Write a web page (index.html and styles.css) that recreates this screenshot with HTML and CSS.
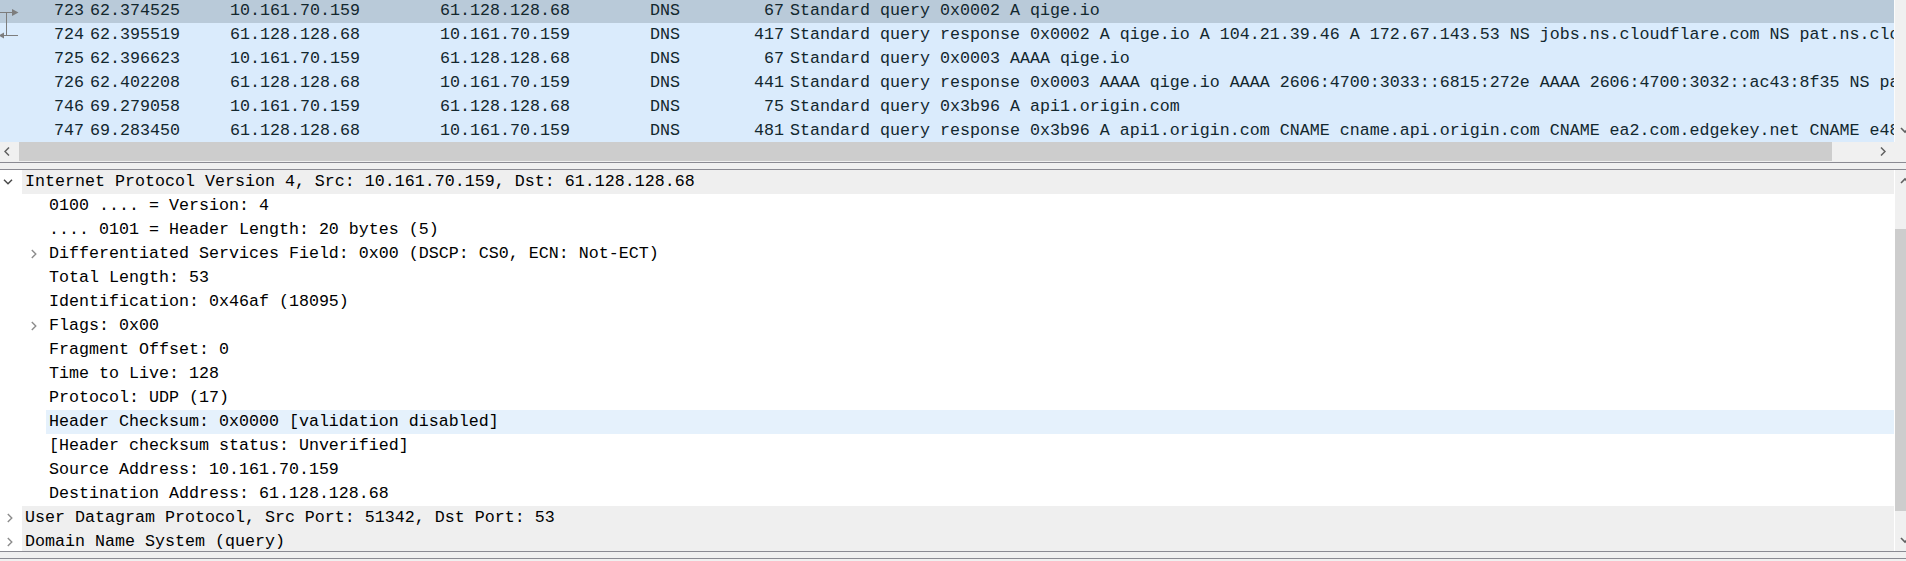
FILE: index.html
```html
<!DOCTYPE html>
<html>
<head>
<meta charset="utf-8">
<link rel="stylesheet" href="styles.css">
</head>
<body>
<div class="app">
  <section class="plist">
    <div class="plist-rows">
      <div class="plist-inner">
        <div class="prow sel"><span class="c-no">723</span><span>62.374525</span><span>10.161.70.159</span><span>61.128.128.68</span><span>DNS</span><span class="c-len">67</span><span class="c-info">Standard query 0x0002 A qige.io</span></div>
        <div class="prow"><span class="c-no">724</span><span>62.395519</span><span>61.128.128.68</span><span>10.161.70.159</span><span>DNS</span><span class="c-len">417</span><span class="c-info">Standard query response 0x0002 A qige.io A 104.21.39.46 A 172.67.143.53 NS jobs.ns.cloudflare.com NS pat.ns.cloudflare.com</span></div>
        <div class="prow"><span class="c-no">725</span><span>62.396623</span><span>10.161.70.159</span><span>61.128.128.68</span><span>DNS</span><span class="c-len">67</span><span class="c-info">Standard query 0x0003 AAAA qige.io</span></div>
        <div class="prow"><span class="c-no">726</span><span>62.402208</span><span>61.128.128.68</span><span>10.161.70.159</span><span>DNS</span><span class="c-len">441</span><span class="c-info">Standard query response 0x0003 AAAA qige.io AAAA 2606:4700:3033::6815:272e AAAA 2606:4700:3032::ac43:8f35 NS pat.ns.cloudflare.com</span></div>
        <div class="prow"><span class="c-no">746</span><span>69.279058</span><span>10.161.70.159</span><span>61.128.128.68</span><span>DNS</span><span class="c-len">75</span><span class="c-info">Standard query 0x3b96 A api1.origin.com</span></div>
        <div class="prow"><span class="c-no">747</span><span>69.283450</span><span>61.128.128.68</span><span>10.161.70.159</span><span>DNS</span><span class="c-len">481</span><span class="c-info">Standard query response 0x3b96 A api1.origin.com CNAME cname.api.origin.com CNAME ea2.com.edgekey.net CNAME e4812.a.akamaiedge.net</span></div>
      </div>
    </div>
    <div class="vscroll">
      <svg class="arr arr-down-top" width="10" height="7" viewBox="0 0 10 7"><polyline points="1,1 5,5 9,1" fill="none" stroke="#606060" stroke-width="1.6"/></svg>
    </div>
    <div class="hscroll">
      <div class="hbtn hbtn-left"><svg width="6" height="9" viewBox="0 0 6 9"><polyline points="5,0.5 1,4.5 5,8.5" fill="none" stroke="#606060" stroke-width="1.5"/></svg></div>
      <div class="hthumb"></div>
      <div class="htrack"><svg width="6" height="9" viewBox="0 0 6 9"><polyline points="1,0.5 5,4.5 1,8.5" fill="none" stroke="#606060" stroke-width="1.5"/></svg></div>
    </div>
    <div class="corner"></div>
    <svg class="related" width="20" height="42" viewBox="0 0 20 42">
      <line x1="0" y1="12.5" x2="13" y2="12.5" stroke="#7d7d7d" stroke-width="1"/>
      <polygon points="12,9 18.5,12.5 12,16" fill="#7d7d7d"/>
      <line x1="6.5" y1="12.5" x2="6.5" y2="36" stroke="#7d7d7d" stroke-width="1"/>
      <line x1="3" y1="35.5" x2="18" y2="35.5" stroke="#7d7d7d" stroke-width="1"/>
      <polygon points="4,32.5 -1.5,35.5 4,38.5" fill="#7d7d7d"/>
    </svg>
  </section>

  <div class="splitter"></div>

  <section class="details">
    <div class="dtree">
      <div class="drow l0"><span class="exp"><svg class="chev-open" width="10" height="6" viewBox="0 0 10 6"><polyline points="1,0.8 5,4.8 9,0.8" fill="none" stroke="#4a4a4a" stroke-width="1.5"/></svg></span><span class="item par">Internet Protocol Version 4, Src: 10.161.70.159, Dst: 61.128.128.68</span></div>
      <div class="drow l1"><span class="exp"></span><span class="item">0100 .... = Version: 4</span></div>
      <div class="drow l1"><span class="exp"></span><span class="item">.... 0101 = Header Length: 20 bytes (5)</span></div>
      <div class="drow l1"><span class="exp"><svg class="chev-closed" width="6" height="10" viewBox="0 0 6 10"><polyline points="0.8,1 4.8,5 0.8,9" fill="none" stroke="#8c8c8c" stroke-width="1.4"/></svg></span><span class="item">Differentiated Services Field: 0x00 (DSCP: CS0, ECN: Not-ECT)</span></div>
      <div class="drow l1"><span class="exp"></span><span class="item">Total Length: 53</span></div>
      <div class="drow l1"><span class="exp"></span><span class="item">Identification: 0x46af (18095)</span></div>
      <div class="drow l1"><span class="exp"><svg class="chev-closed" width="6" height="10" viewBox="0 0 6 10"><polyline points="0.8,1 4.8,5 0.8,9" fill="none" stroke="#8c8c8c" stroke-width="1.4"/></svg></span><span class="item">Flags: 0x00</span></div>
      <div class="drow l1"><span class="exp"></span><span class="item">Fragment Offset: 0</span></div>
      <div class="drow l1"><span class="exp"></span><span class="item">Time to Live: 128</span></div>
      <div class="drow l1"><span class="exp"></span><span class="item">Protocol: UDP (17)</span></div>
      <div class="drow l1"><span class="exp"></span><span class="item hover">Header Checksum: 0x0000 [validation disabled]</span></div>
      <div class="drow l1"><span class="exp"></span><span class="item">[Header checksum status: Unverified]</span></div>
      <div class="drow l1"><span class="exp"></span><span class="item">Source Address: 10.161.70.159</span></div>
      <div class="drow l1"><span class="exp"></span><span class="item">Destination Address: 61.128.128.68</span></div>
      <div class="drow l0"><span class="exp"><svg class="chev-closed" width="6" height="10" viewBox="0 0 6 10"><polyline points="0.8,1 4.8,5 0.8,9" fill="none" stroke="#8c8c8c" stroke-width="1.4"/></svg></span><span class="item par">User Datagram Protocol, Src Port: 51342, Dst Port: 53</span></div>
      <div class="drow l0"><span class="exp"><svg class="chev-closed" width="6" height="10" viewBox="0 0 6 10"><polyline points="0.8,1 4.8,5 0.8,9" fill="none" stroke="#8c8c8c" stroke-width="1.4"/></svg></span><span class="item par">Domain Name System (query)</span></div>
    </div>
    <div class="vscroll dscroll">
      <svg class="arr arr-up" width="10" height="7" viewBox="0 0 10 7"><polyline points="1,6 5,2 9,6" fill="none" stroke="#606060" stroke-width="1.6"/></svg>
      <div class="vthumb"></div>
      <svg class="arr arr-down" width="10" height="7" viewBox="0 0 10 7"><polyline points="1,1 5,5 9,1" fill="none" stroke="#606060" stroke-width="1.6"/></svg>
    </div>
  </section>

  <div class="splitter"></div>
</div>
</body>
</html>
```
FILE: styles.css
```css
* { box-sizing: border-box; }
html, body { margin: 0; padding: 0; }
body {
  width: 1906px;
  height: 561px;
  overflow: hidden;
  background: #f0f0f0;
  font-family: "Liberation Mono", "DejaVu Sans Mono", monospace;
  font-size: 16.66px;
}
.app { display: flex; flex-direction: column; height: 561px; }

/* packet list */
.plist {
  position: relative;
  display: grid;
  grid-template-columns: 1fr 12px;
  grid-template-rows: 142px 19px;
  height: 161px;
  flex: none;
}
.plist-rows { overflow: hidden; background: #fff; }
.plist-inner { margin-top: -1px; }
.prow {
  display: grid;
  grid-template-columns: 85px 140px 210px 210px 100px 40px 1fr;
  height: 24px;
  line-height: 24px;
  background: #daebfc;
  color: #12272e;
  white-space: nowrap;
}
.prow.sel { background: #b9cad9; }
.prow > span { overflow: hidden; min-width: 0; padding-left: 5px; }
.prow > .c-no { text-align: right; padding-left: 0; padding-right: 1px; }
.prow > .c-len { text-align: right; padding-left: 0; padding-right: 1px; }

.vscroll {
  position: relative;
  overflow: hidden;
  background: #f0f0f0;
  border-left: 1px solid #fbfbfb;
}
.arr { position: absolute; left: 5px; }
.arr-down-top { top: 127px; }

.hscroll { display: flex; height: 19px; background: #f0f0f0; }
.hbtn-left { width: 19px; flex: none; display: flex; align-items: center; padding-left: 4px; }
.hthumb { flex: 1; background: #cdcdcd; }
.htrack { width: 62px; flex: none; display: flex; align-items: center; justify-content: flex-end; padding-right: 8px; }
.corner { background: #f0f0f0; }

.related { position: absolute; left: 0; top: 0; }

/* splitter */
.splitter {
  flex: none;
  height: 8px;
  margin-top: 1px;
  border-top: 1px solid #8a8a92;
  border-bottom: 1px solid #8a8a92;
  background: #f0f0f0;
}

/* details tree */
.details {
  display: grid;
  grid-template-columns: 1fr 12px;
  height: 381px;
  flex: none;
  background: #fff;
}
.details + .splitter { margin-top: 0; }
.dtree { overflow: hidden; background: #fff; }
.drow {
  display: flex;
  height: 24px;
  line-height: 24px;
  color: #000;
  white-space: nowrap;
}
.drow.l1 { padding-left: 24px; }
.exp { width: 22px; flex: none; display: flex; align-items: center; }
.chev-open { margin-left: 3px; }
.chev-closed { margin-left: 7px; }
.item { flex: 1; min-width: 0; padding-left: 3px; overflow: hidden; }
.item.par { background: #efefef; }
.item.hover { background: #e5f1fc; }

.dscroll { border-left: 1px solid #ffffff; }
.vthumb { position: absolute; left: 0; right: 0; top: 59px; height: 282px; background: #cdcdcd; }
.arr-up { top: 7px; }
.arr-down { top: 367px; }
```
